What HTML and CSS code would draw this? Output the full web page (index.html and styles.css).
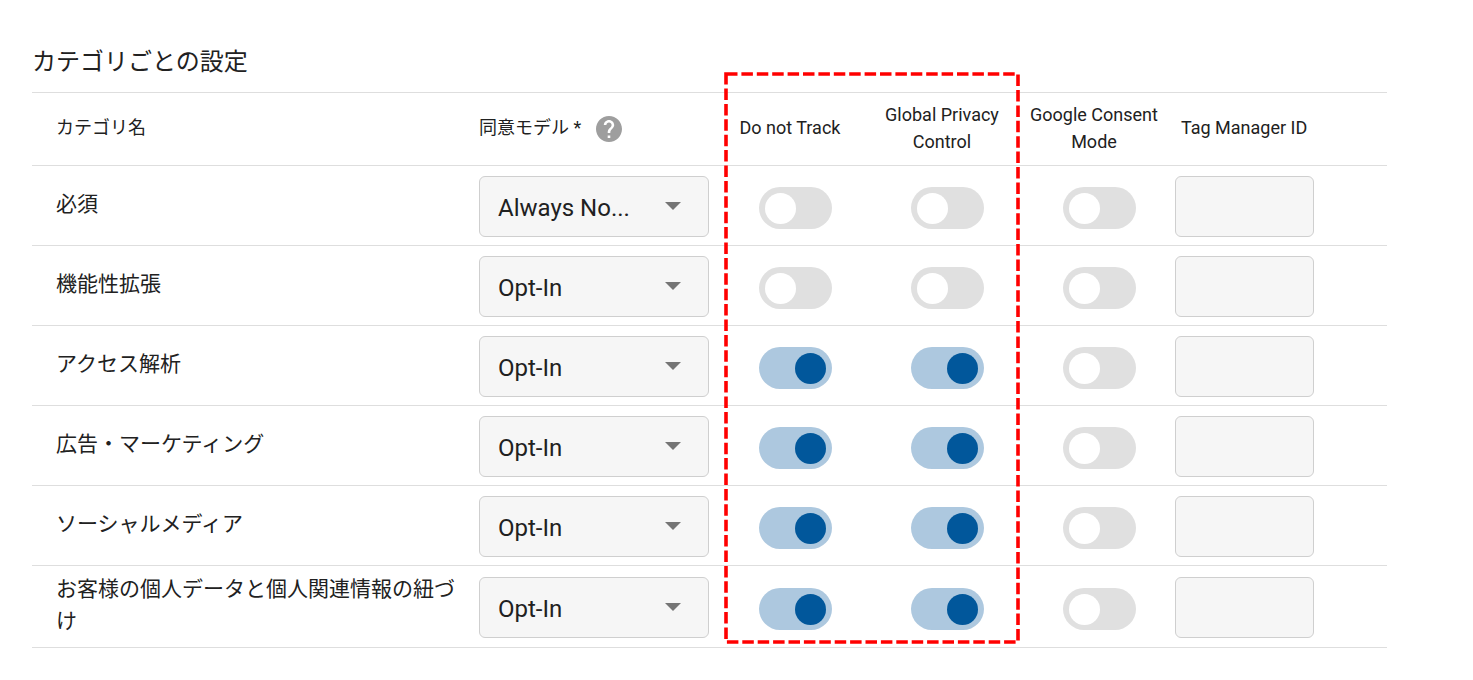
FILE: index.html
```
<!DOCTYPE html>
<html lang="ja">
  <head>
    <title>カテゴリごとの設定</title>
    <meta charset="utf-8" />
    <meta name="viewport" content="width=device-width, initial-scale=1.0" />
    <link rel="stylesheet" href="styles.css">
  </head>

  <body>
    <h1>カテゴリごとの設定</h1>
    <div class="table-wrap">
      <table class="settings">
        <colgroup>
          <col />
          <col class="col-model" />
          <col class="col-toggle" />
          <col class="col-toggle" />
          <col class="col-toggle" />
          <col class="col-tag" />
        </colgroup>
        <thead>
          <tr>
            <th class="name" scope="col">カテゴリ名</th>
            <th scope="col">
              <div class="model-head">
                <span id="model">同意モデル *</span>
                <svg class="help" viewBox="2 2 20 20" aria-hidden="true">
                  <path fill="#9e9e9e" d="M12 2C6.48 2 2 6.48 2 12s4.48 10 10 10 10-4.48 10-10S17.52 2 12 2zm1 17h-2v-2h2v2zm2.07-7.75l-.9.92C13.45 12.9 13 13.5 13 15h-2v-.5c0-1.1.45-2.1 1.17-2.83l1.24-1.26c.37-.36.59-.86.59-1.41 0-1.1-.9-2-2-2s-2 .9-2 2H8c0-2.21 1.79-4 4-4s4 1.79 4 4c0 .88-.36 1.68-.93 2.25z" />
                </svg>
              </div>
            </th>
            <th class="center" scope="col" id="dnt">Do not Track</th>
            <th class="center" scope="col" id="gpc">Global Privacy Control</th>
            <th class="center" scope="col" id="gcm">Google Consent Mode</th>
            <th class="tag-head" scope="col" id="tag">Tag Manager ID</th>
          </tr>
        </thead>
        <tbody>
          <tr>
            <th class="name" scope="row" id="row1">必須</th>
            <td class="model">
              <div class="select">
                <select aria-labelledby="row1 model">
                  <option selected>Always No...</option>
                  <option>Opt-In</option>
                </select>
                <svg class="arrow" viewBox="0 0 16 8" aria-hidden="true"><path d="M0 0h16L8 8z" /></svg>
              </div>
            </td>
            <td class="toggle"><input type="checkbox" aria-labelledby="row1 dnt" /></td>
            <td class="toggle"><input type="checkbox" aria-labelledby="row1 gpc" /></td>
            <td class="toggle"><input type="checkbox" aria-labelledby="row1 gcm" /></td>
            <td class="tag"><input type="text" aria-labelledby="row1 tag" /></td>
          </tr>
          <tr>
            <th class="name" scope="row" id="row2">機能性拡張</th>
            <td class="model">
              <div class="select">
                <select aria-labelledby="row2 model">
                  <option>Always No...</option>
                  <option selected>Opt-In</option>
                </select>
                <svg class="arrow" viewBox="0 0 16 8" aria-hidden="true"><path d="M0 0h16L8 8z" /></svg>
              </div>
            </td>
            <td class="toggle"><input type="checkbox" aria-labelledby="row2 dnt" /></td>
            <td class="toggle"><input type="checkbox" aria-labelledby="row2 gpc" /></td>
            <td class="toggle"><input type="checkbox" aria-labelledby="row2 gcm" /></td>
            <td class="tag"><input type="text" aria-labelledby="row2 tag" /></td>
          </tr>
          <tr>
            <th class="name" scope="row" id="row3">アクセス解析</th>
            <td class="model">
              <div class="select">
                <select aria-labelledby="row3 model">
                  <option>Always No...</option>
                  <option selected>Opt-In</option>
                </select>
                <svg class="arrow" viewBox="0 0 16 8" aria-hidden="true"><path d="M0 0h16L8 8z" /></svg>
              </div>
            </td>
            <td class="toggle"><input type="checkbox" aria-labelledby="row3 dnt" checked /></td>
            <td class="toggle"><input type="checkbox" aria-labelledby="row3 gpc" checked /></td>
            <td class="toggle"><input type="checkbox" aria-labelledby="row3 gcm" /></td>
            <td class="tag"><input type="text" aria-labelledby="row3 tag" /></td>
          </tr>
          <tr>
            <th class="name" scope="row" id="row4">広告・マーケティング</th>
            <td class="model">
              <div class="select">
                <select aria-labelledby="row4 model">
                  <option>Always No...</option>
                  <option selected>Opt-In</option>
                </select>
                <svg class="arrow" viewBox="0 0 16 8" aria-hidden="true"><path d="M0 0h16L8 8z" /></svg>
              </div>
            </td>
            <td class="toggle"><input type="checkbox" aria-labelledby="row4 dnt" checked /></td>
            <td class="toggle"><input type="checkbox" aria-labelledby="row4 gpc" checked /></td>
            <td class="toggle"><input type="checkbox" aria-labelledby="row4 gcm" /></td>
            <td class="tag"><input type="text" aria-labelledby="row4 tag" /></td>
          </tr>
          <tr>
            <th class="name" scope="row" id="row5">ソーシャルメディア</th>
            <td class="model">
              <div class="select">
                <select aria-labelledby="row5 model">
                  <option>Always No...</option>
                  <option selected>Opt-In</option>
                </select>
                <svg class="arrow" viewBox="0 0 16 8" aria-hidden="true"><path d="M0 0h16L8 8z" /></svg>
              </div>
            </td>
            <td class="toggle"><input type="checkbox" aria-labelledby="row5 dnt" checked /></td>
            <td class="toggle"><input type="checkbox" aria-labelledby="row5 gpc" checked /></td>
            <td class="toggle"><input type="checkbox" aria-labelledby="row5 gcm" /></td>
            <td class="tag"><input type="text" aria-labelledby="row5 tag" /></td>
          </tr>
          <tr>
            <th class="name" scope="row" id="row6">お客様の個人データと個人関連情報の紐づけ</th>
            <td class="model">
              <div class="select">
                <select aria-labelledby="row6 model">
                  <option>Always No...</option>
                  <option selected>Opt-In</option>
                </select>
                <svg class="arrow" viewBox="0 0 16 8" aria-hidden="true"><path d="M0 0h16L8 8z" /></svg>
              </div>
            </td>
            <td class="toggle"><input type="checkbox" aria-labelledby="row6 dnt" checked /></td>
            <td class="toggle"><input type="checkbox" aria-labelledby="row6 gpc" checked /></td>
            <td class="toggle"><input type="checkbox" aria-labelledby="row6 gcm" /></td>
            <td class="tag"><input type="text" aria-labelledby="row6 tag" /></td>
          </tr>
        </tbody>
      </table>
      <!-- dashed frame around the two privacy signal columns -->
      <svg class="highlight" aria-hidden="true"><rect x="2" y="2" /></svg>
    </div>
  </body>
</html>
```

FILE: styles.css
```
body {
  margin: 0;
  padding: 44px 86px 32px 32px;
  font-family: Roboto, "Noto Sans CJK JP", sans-serif;
  color: #212121;
  background-color: #fff;
}

h1 {
  margin: 0 0 12px;
  font-size: 24px;
  line-height: 36px;
  font-weight: normal;
}

.table-wrap {
  position: relative;
}

.settings {
  width: 100%;
  table-layout: fixed;
  border-collapse: separate;
  border-spacing: 0;
  border-top: 1px solid #dedede;
}

.col-model {
  width: 235px;
}

.col-toggle {
  width: 152px;
}

.col-tag {
  width: 217px;
}

th,
td {
  box-sizing: border-box;
  padding: 0;
  border-bottom: 1px solid #dedede;
  text-align: left;
  font-weight: normal;
  vertical-align: middle;
}

thead th {
  height: 73px;
  padding-bottom: 3px;
  font-size: 18px;
  line-height: 27px;
}

.name {
  padding-left: 24px;
}

tbody .name {
  height: 80px;
  padding-right: 16px;
  padding-bottom: 3px;
  font-size: 21px;
  line-height: 32px;
}

tbody tr:last-child .name {
  height: 82px;
}

thead .center {
  padding: 0 8px 3px;
  text-align: center;
}

.model-head {
  display: flex;
  align-items: center;
  gap: 15px;
}

.help {
  width: 26px;
  height: 26px;
  margin-top: 3px;
}

.tag-head {
  padding-left: 11px;
}

.model {
  padding: 1px 5px 0 0;
}

.select {
  position: relative;
}

select,
input[type="text"] {
  display: block;
  box-sizing: border-box;
  width: 100%;
  height: 61px;
  border: 1px solid #cfcfcf;
  border-radius: 6px;
  background-color: #f6f6f6;
  font-family: inherit;
  font-size: 24px;
  color: #212121;
}

select {
  appearance: none;
  padding: 3px 50px 0 18px;
}

.arrow {
  position: absolute;
  top: 26px;
  right: 28px;
  width: 16px;
  height: 8px;
  fill: #757575;
  pointer-events: none;
}

.toggle {
  padding: 5px 0 0 10px;
  text-align: center;
}

.toggle input {
  appearance: none;
  display: block;
  box-sizing: border-box;
  width: 73px;
  height: 42px;
  margin: 0 auto;
  padding: 6px;
  border-radius: 21px;
  background-color: #e0e0e0;
  cursor: pointer;
}

.toggle input::before {
  content: "";
  display: block;
  width: 31px;
  height: 31px;
  border-radius: 50%;
  background-color: #fff;
}

.toggle input:checked {
  background-color: #adc8df;
}

.toggle input:checked::before {
  margin-left: auto;
  background-color: #01579b;
}

.tag {
  padding: 1px 73px 0 5px;
}

.tag input {
  padding: 0 12px;
}

.highlight {
  position: absolute;
  top: -20px;
  right: 367px;
  width: 296px;
  height: calc(100% + 16px);
  pointer-events: none;
}

.highlight rect {
  width: calc(100% - 4px);
  height: calc(100% - 4px);
  fill: none;
  stroke: #f00;
  stroke-width: 3.6;
  stroke-dasharray: 11.5 3.9;
}
```
